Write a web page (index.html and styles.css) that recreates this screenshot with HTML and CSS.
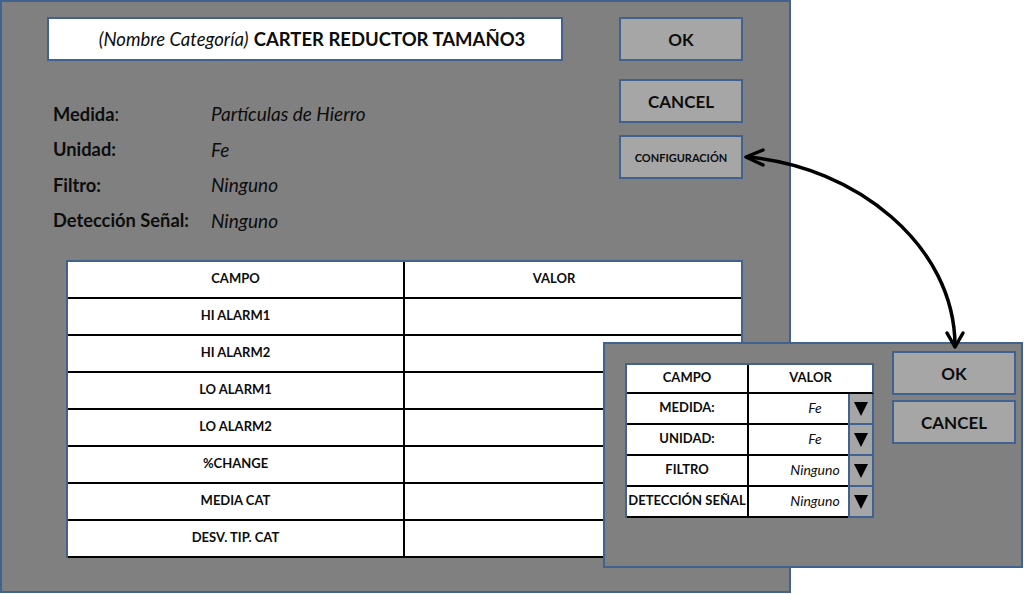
FILE: index.html
```html
<!DOCTYPE html>
<html lang="es">
<head>
    <meta charset="UTF-8">
    <meta name="viewport" content="width=device-width, initial-scale=1.0">
    <title>Categoría - Configuración</title>
    <link rel="stylesheet" href="styles.css">
</head>
<body>
<div class="screen">
    <!-- Ventana principal de la categoría -->
    <section class="window main-window">
        <div class="top">
            <div class="info">
                <div class="title-box"><em>(Nombre Categoría)</em> <strong>CARTER REDUCTOR TAMAÑO3</strong></div>
                <dl class="fields">
                    <dt><b>Medida</b>:</dt><dd>Partículas de Hierro</dd>
                    <dt><b>Unidad:</b></dt><dd>Fe</dd>
                    <dt><b>Filtro:</b></dt><dd>Ninguno</dd>
                    <dt><b>Detección Señal:</b></dt><dd>Ninguno</dd>
                </dl>
            </div>
            <div class="actions">
                <button class="btn">OK</button>
                <button class="btn">CANCEL</button>
                <button class="btn btn-small">CONFIGURACIÓN</button>
            </div>
        </div>

        <div class="alarm-table">
            <div class="cell head">CAMPO</div>
            <div class="cell head valor-head">VALOR</div>
            <div class="cell">HI ALARM1</div><div class="cell"></div>
            <div class="cell">HI ALARM2</div><div class="cell"></div>
            <div class="cell">LO ALARM1</div><div class="cell"></div>
            <div class="cell">LO ALARM2</div><div class="cell"></div>
            <div class="cell">%CHANGE</div><div class="cell"></div>
            <div class="cell">MEDIA CAT</div><div class="cell"></div>
            <div class="cell">DESV. TIP. CAT</div><div class="cell"></div>
        </div>
    </section>

    <!-- Ventana de configuración -->
    <section class="window config-window">
        <div class="config-table">
            <div class="cell head">CAMPO</div>
            <div class="cell head span2">VALOR</div>

            <div class="cell">MEDIDA:</div>
            <div class="cell value">Fe</div>
            <div class="drop"><span class="tri"></span></div>

            <div class="cell">UNIDAD:</div>
            <div class="cell value">Fe</div>
            <div class="drop"><span class="tri"></span></div>

            <div class="cell">FILTRO</div>
            <div class="cell value">Ninguno</div>
            <div class="drop"><span class="tri"></span></div>

            <div class="cell">DETECCIÓN SEÑAL</div>
            <div class="cell value">Ninguno</div>
            <div class="drop"><span class="tri"></span></div>
        </div>
        <div class="actions actions-config">
            <button class="btn">OK</button>
            <button class="btn">CANCEL</button>
        </div>
    </section>

    <!-- flecha entre CONFIGURACIÓN y la ventana de configuración -->
    <svg class="link-arrow" width="1024" height="594" viewBox="0 0 1024 594">
        <g fill="none" stroke="#000" stroke-width="3.5" stroke-linecap="round" stroke-linejoin="round">
            <path d="M747 157 C 855 166, 955 245, 955 346"/>
            <path d="M763 150 L746 157 L763 165"/>
            <path d="M947 333 L955 347 L963 333"/>
        </g>
    </svg>
</div>
</body>
</html>
```

FILE: styles.css
```css
body {
    margin: 0;
    background-color: #fff;
    font-family: Lato, "Open Sans", sans-serif;
    color: #0d0d0d;
}
.screen {
    position: relative;
    width: 1024px;
    height: 594px;
}
.window {
    box-sizing: border-box;
    background-color: #808080;
    border: 2px solid #41618f;
}
.main-window {
    width: 791px;
    height: 593px;
    padding-top: 15px;
}
.top {
    display: flex;
    padding-left: 45px;
}
.info {
    width: 516px;
}
.title-box {
    box-sizing: border-box;
    height: 44px;
    background-color: #fff;
    border: 2px solid #41618f;
    display: flex;
    align-items: center;
    justify-content: center;
    font-size: 18.5px;
    padding-left: 14px;
}
.title-box em {
    font-style: italic;
    margin-right: 5px;
}
.fields {
    display: grid;
    grid-template-columns: 158px 1fr;
    grid-auto-rows: 35.5px;
    align-items: center;
    margin: 35px 0 0 6px;
    font-size: 18.3px;
}
.fields dt, .fields dd {
    margin: 0;
}
.fields dd {
    font-style: italic;
    font-size: 19px;
}
.actions {
    display: flex;
    flex-direction: column;
    width: 124px;
    margin-left: 56px;
}
.btn {
    box-sizing: border-box;
    height: 44px;
    margin: 0 0 18px 0;
    padding: 0;
    background-color: #a6a6a6;
    border: 2px solid #41618f;
    font-family: inherit;
    font-size: 17px;
    font-weight: bold;
    color: #0d0d0d;
}
.btn + .btn + .btn {
    margin-top: -6px;
}
.btn-small {
    font-size: 11px;
}

/* tabla CAMPO / VALOR de alarmas */
.alarm-table {
    box-sizing: border-box;
    display: grid;
    grid-template-columns: 337px 1fr;
    grid-auto-rows: 37px;
    width: 677px;
    margin: 22px 0 0 64px;
    background-color: #fff;
    border: 2px solid #41618f;
    border-bottom: none;
    font-size: 13px;
    font-weight: bold;
}
.cell {
    box-sizing: border-box;
    display: flex;
    align-items: center;
    justify-content: center;
    border-bottom: 2px solid #000;
    padding-bottom: 3px;
    white-space: nowrap;
}
.alarm-table .cell:nth-child(odd) {
    border-right: 2px solid #000;
}
.valor-head {
    padding-right: 38px;
}

/* ventana de configuración */
.config-window {
    position: absolute;
    left: 603px;
    top: 342px;
    width: 420px;
    height: 226px;
    display: flex;
    align-items: flex-start;
    padding: 7px 0 0 20px;
}
.config-table {
    box-sizing: border-box;
    display: grid;
    grid-template-columns: 122px 99px 26px;
    grid-template-rows: 29px repeat(4, 31px);
    width: 249px;
    margin-top: 12px;
    background-color: #fff;
    border-top: 2px solid #41618f;
    border-left: 2px solid #41618f;
    font-size: 13px;
    font-weight: bold;
}
.config-table .cell:first-child,
.config-table .cell:nth-child(3n) {
    border-right: 2px solid #000;
}
.config-table .span2 {
    grid-column: span 2;
    border-right: 2px solid #41618f;
}
.config-table .value {
    font-weight: normal;
    font-style: italic;
    font-size: 14px;
    padding-left: 33px;
}
.drop {
    box-sizing: border-box;
    display: flex;
    align-items: center;
    justify-content: center;
    background-color: #a6a6a6;
    border: 2px solid #41618f;
    border-top: none;
}
.tri {
    width: 0;
    height: 0;
    border-left: 7px solid transparent;
    border-right: 7px solid transparent;
    border-top: 14px solid #000;
}
.actions-config {
    margin-left: 18px;
}
.actions-config .btn {
    margin-bottom: 5px;
}

.link-arrow {
    position: absolute;
    left: 0;
    top: 0;
    pointer-events: none;
}
```
